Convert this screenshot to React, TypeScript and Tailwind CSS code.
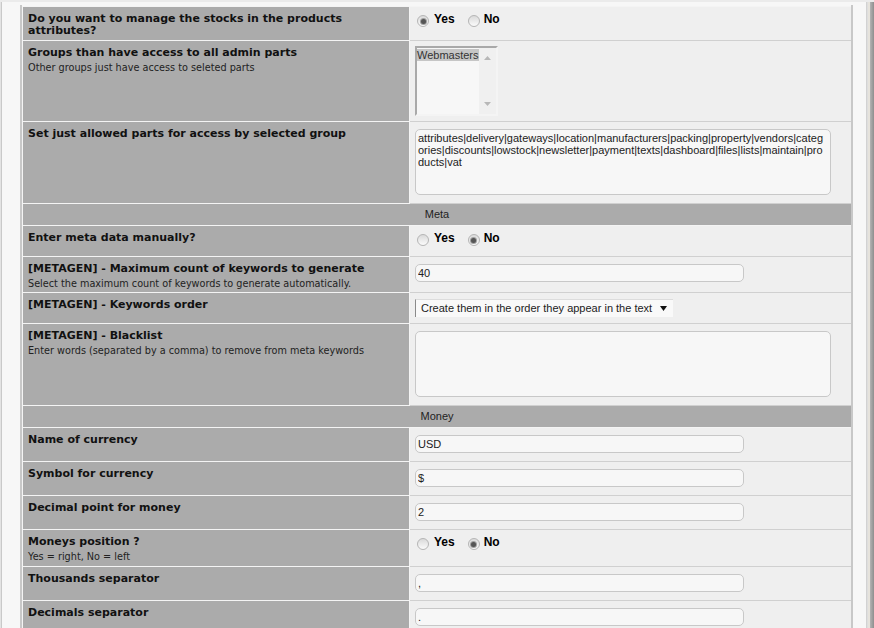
import type { ReactNode } from 'react';

type RowProps = {
  h: string;
  label: ReactNode;
  desc?: string;
  children?: ReactNode;
};

function Row({ h, label, desc, children }: RowProps) {
  return (
    <div className={`flex ${h}`}>
      <div className="w-[386px] shrink-0 bg-[#ababab] border-b border-[#f4f4f4] pl-[5px] pt-[6px] font-['DejaVu_Sans',Verdana,sans-serif] text-[#111]">
        <div className="text-[11px] leading-[12px] font-bold">{label}</div>
        {desc && <div className="mt-[3px] text-[9.7px] leading-[12px] text-[#222]">{desc}</div>}
      </div>
      <div className="w-[1px] shrink-0 bg-[#f4f4f4]" />
      <div className="flex-1 bg-[#efefef] border-b border-[#d0d0d0]">{children}</div>
    </div>
  );
}

function Header({ title }: { title: string }) {
  return (
    <div className="h-[22px] bg-[#ababab] border-b border-[#f4f4f4] pt-[4px] text-center text-[11px] leading-[12px] text-[#222]">
      {title}
    </div>
  );
}

function Radio({ checked }: { checked?: boolean }) {
  return (
    <span className="mt-[2px] w-[12px] h-[12px] shrink-0 rounded-full border border-[#b5b5b5] bg-linear-to-b from-[#dadada] to-[#fbfbfb] flex items-center justify-center">
      {checked && <span className="w-[5px] h-[5px] rounded-full bg-[#555] ring-1 ring-[#a0a0a0]" />}
    </span>
  );
}

function YesNo({ yes }: { yes: boolean }) {
  return (
    <div className="flex items-start pt-[6px] pl-[7px] text-[12px] leading-[12px] font-bold text-black">
      <Radio checked={yes} />
      <span className="ml-[5px]">Yes</span>
      <span className="ml-[13px] flex">
        <Radio checked={!yes} />
      </span>
      <span className="ml-[4px]">No</span>
    </div>
  );
}

function TextInput({ value }: { value: string }) {
  return (
    <div className="pt-[7px] pl-[5px]">
      <input
        readOnly
        value={value}
        className="block w-[329px] h-[18px] rounded-[5px] border border-[#c8c8c8] bg-[#f7f7f7] px-[2px] py-0 text-[11px] text-[#222] outline-none"
      />
    </div>
  );
}

function TextBox({ lines }: { lines: string[] }) {
  return (
    <div className="pt-[7px] pl-[5px]">
      <div className="w-[416px] h-[66px] rounded-[5px] border border-[#c8c8c8] bg-[#f7f7f7] pl-[2px] pt-[2px] text-[11px] leading-[12px] text-[#222]">
        {lines.map((l) => (
          <div key={l}>{l}</div>
        ))}
      </div>
    </div>
  );
}

export default function App() {
  return (
    <div className="w-[874px] h-[628px] overflow-hidden bg-[#f7f7f7] flex flex-col font-['Liberation_Sans',Arial,sans-serif]">
      <div className="h-[2px] shrink-0 bg-[#ebebeb]" />
      <div className="flex flex-1">
        <div className="w-[1px] bg-[#e3e3e3]" />
        <div className="w-[1px] bg-[#c9c9c9]" />
        <div className="w-[18px]" />
        <div className="w-[833px] pt-[3px] flex flex-col">
          <div className="flex-1 border-l-2 border-r-2 border-[#c8c8c8] pt-[1px]">
            <div className="border-t border-l border-[#f4f4f4]">
              <Row
                h="h-[34px]"
                label={
                  <>
                    Do you want to manage the stocks in the products
                    <br />
                    attributes?
                  </>
                }
              >
                <YesNo yes />
              </Row>

              <Row h="h-[81px]" label="Groups than have access to all admin parts" desc="Other groups just have access to seleted parts">
                <div className="pt-[5px] pl-[5px]">
                  <div className="w-[83px] h-[70px] flex border-l-2 border-t-2 border-r-2 border-b-2 border-l-[#a9a9a9] border-t-[#a9a9a9] border-r-[#f4f4f4] border-b-[#f4f4f4] bg-[#f7f7f7]">
                    <div className="w-[62px] pt-[1px]">
                      <div className="bg-[#c6c6c6] text-[11px] leading-[12px] text-[#333]">Webmasters</div>
                    </div>
                    <div className="w-[17px] bg-[#f0f0f0] flex flex-col items-center justify-between py-[8px]">
                      <svg width="7" height="4" viewBox="0 0 7 4">
                        <polygon points="3.5,0 7,4 0,4" fill="#b8b8b8" />
                      </svg>
                      <svg width="7" height="4" viewBox="0 0 7 4">
                        <polygon points="0,0 7,0 3.5,4" fill="#b8b8b8" />
                      </svg>
                    </div>
                  </div>
                </div>
              </Row>

              <Row h="h-[82px]" label="Set just allowed parts for access by selected group">
                <TextBox
                  lines={[
                    'attributes|delivery|gateways|location|manufacturers|packing|property|vendors|categ',
                    'ories|discounts|lowstock|newsletter|payment|texts|dashboard|files|lists|maintain|pro',
                    'ducts|vat',
                  ]}
                />
              </Row>

              <Header title="Meta" />

              <Row h="h-[31px]" label="Enter meta data manually?">
                <YesNo yes={false} />
              </Row>

              <Row
                h="h-[36px]"
                label="[METAGEN] - Maximum count of keywords to generate"
                desc="Select the maximum count of keywords to generate automatically."
              >
                <TextInput value="40" />
              </Row>

              <Row h="h-[31px]" label="[METAGEN] - Keywords order">
                <div className="pt-[6px] pl-[5px]">
                  <div className="w-[258px] h-[18px] flex items-center justify-between border-l border-t border-l-[#8a8a8a] border-t-[#dcdcdc] bg-[#f9f9f9] pl-[5px] pr-[6px] text-[11px] text-[#222]">
                    <span>Create them in the order they appear in the text</span>
                    <svg width="7" height="5" viewBox="0 0 7 5">
                      <polygon points="0,0 7,0 3.5,5" fill="#111" />
                    </svg>
                  </div>
                </div>
              </Row>

              <Row
                h="h-[82px]"
                label="[METAGEN] - Blacklist"
                desc="Enter words (separated by a comma) to remove from meta keywords"
              >
                <TextBox lines={[]} />
              </Row>

              <Header title="Money" />

              <Row h="h-[34px]" label="Name of currency">
                <TextInput value="USD" />
              </Row>
              <Row h="h-[34px]" label="Symbol for currency">
                <TextInput value="$" />
              </Row>
              <Row h="h-[34px]" label="Decimal point for money">
                <TextInput value="2" />
              </Row>
              <Row h="h-[37px]" label="Moneys position ?" desc="Yes = right, No = left">
                <YesNo yes={false} />
              </Row>
              <Row h="h-[34px]" label="Thousands separator">
                <TextInput value="," />
              </Row>
              <Row h="h-[34px]" label="Decimals separator">
                <TextInput value="." />
              </Row>
            </div>
          </div>
        </div>
        <div className="w-[13px]" />
        <div className="w-[1px] bg-[#d2d2d2]" />
        <div className="w-[1px] bg-[#dedede]" />
        <div className="w-[2px] bg-[#e6e3dc]" />
        <div className="w-[4px] bg-linear-to-r from-[#b4b4b4] to-[#8e8e8e]" />
      </div>
    </div>
  );
}
